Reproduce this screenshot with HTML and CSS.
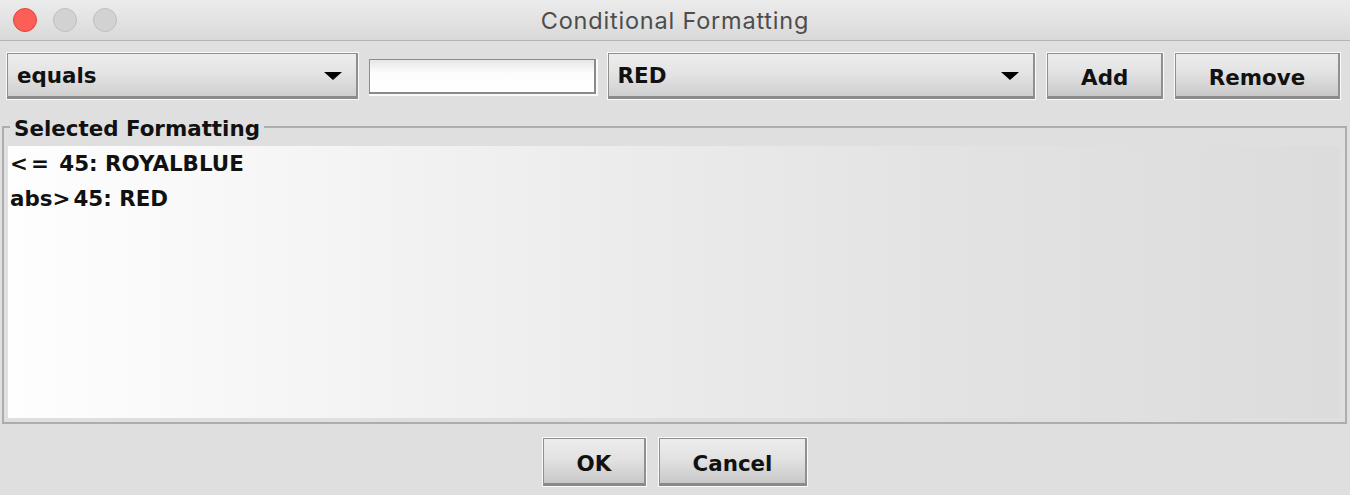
FILE: index.html
```html
<!DOCTYPE html>
<html lang="en">
<head>
  <meta charset="UTF-8">
  <title>Conditional Formatting</title>
  <link rel="stylesheet" href="styles.css">
</head>
<body>
  <div class="titlebar">
    <div class="lights">
      <span class="light close"></span>
      <span class="light"></span>
      <span class="light"></span>
    </div>
    <div class="title">Conditional Formatting</div>
  </div>

  <div class="toolbar">
    <div class="combo combo-op">
      <span>equals</span>
      <span class="arrow"></span>
    </div>
    <input type="text" class="field">
    <div class="combo combo-color">
      <span>RED</span>
      <span class="arrow"></span>
    </div>
    <button class="btn btn-add">Add</button>
    <button class="btn btn-remove">Remove</button>
  </div>

  <fieldset class="group">
    <legend>Selected Formatting</legend>
    <ul class="rules">
      <li><span class="op">&lt;=</span> 45: ROYALBLUE</li>
      <li>abs<span class="op">&gt;</span>45: RED</li>
    </ul>
  </fieldset>

  <div class="footer">
    <button class="btn btn-ok">OK</button>
    <button class="btn btn-cancel">Cancel</button>
  </div>
</body>
</html>
```

FILE: styles.css
```css
body {
  margin: 0;
  width: 1350px;
  height: 495px;
  overflow: hidden;
  background: #dfdfdf;
  font-family: "DejaVu Sans", "Liberation Sans", sans-serif;
  font-weight: bold;
  font-size: 21.4px;
  color: #111;
}

.titlebar {
  position: relative;
  height: 40px;
  background: linear-gradient(#ececec, #d9d9d9);
  border-bottom: 1px solid #b4b4b4;
  display: flex;
  align-items: center;
  justify-content: center;
}
.lights {
  position: absolute;
  left: 13px;
  top: 8px;
  display: flex;
  gap: 16px;
}
.light {
  width: 22px;
  height: 22px;
  border-radius: 50%;
  background: #d2d2d2;
  border: 1px solid #bfbfbf;
}
.light.close {
  background: #fd5f57;
  border-color: #e0443e;
}
.title {
  font-family: Inter, "Noto Sans", sans-serif;
  font-weight: normal;
  font-size: 23.5px;
  letter-spacing: 0.8px;
  color: #4d4d4d;
}

.toolbar {
  display: flex;
  align-items: center;
  gap: 12px;
  padding: 12px 10px 0 7px;
  height: 46px;
}

.combo {
  box-sizing: border-box;
  height: 46px;
  display: flex;
  align-items: center;
  justify-content: space-between;
  padding: 1px 14px 0 9px;
  border: 1px solid #8f8f8f;
  border-right-width: 2px;
  border-bottom: 3px solid #8a8a8a;
  box-shadow: 0 0 0 1px #fafafa;
  background: linear-gradient(#ededed, #e4e4e4 45%, #cfcfcf);
}
.combo-op {
  width: 351px;
}
.combo-color {
  width: 428px;
}
.arrow {
  width: 0;
  height: 0;
  border-left: 9px solid transparent;
  border-right: 9px solid transparent;
  border-top: 8px solid #000;
}

.field {
  box-sizing: border-box;
  width: 227px;
  height: 35px;
  border: 1px solid #8c8c8c;
  border-right: 2px solid #8a8a8a;
  border-bottom: 2px solid #8a8a8a;
  box-shadow: 1px 1px 0 1px #fafafa;
  background: linear-gradient(#e6e6e6, #fdfdfd 40%, #fff);
  margin-left: -1px;
}

.btn {
  box-sizing: border-box;
  height: 46px;
  font-family: "DejaVu Sans", "Liberation Sans", sans-serif;
  font-weight: bold;
  font-size: 21.4px;
  color: #111;
  border: 1px solid #8f8f8f;
  border-right-width: 2px;
  border-bottom: 3px solid #8a8a8a;
  box-shadow: 0 0 0 1px #fafafa;
  background: linear-gradient(#ececec, #e2e2e2 45%, #c8c8c8);
  padding: 5px 0 0;
}
.btn-add {
  width: 116px;
}
.btn-remove {
  width: 165px;
}

.group {
  margin: 14px 3px 0 2px;
  padding: 5px 5px 4px 4px;
  border: 2px solid #adadad;
}
.group legend {
  margin-left: 2px;
  padding: 4px 4px 0;
  line-height: 24px;
}

.rules {
  list-style: none;
  margin: 0;
  padding: 0 2px;
  height: 272px;
  box-sizing: border-box;
  background: linear-gradient(to right, #fefefe, #f0f0f0 35%, #e3e3e3 70%, #dcdcdc);
}
.rules li {
  line-height: 35px;
}
.rules .op {
  letter-spacing: 3px;
}

.footer {
  display: flex;
  justify-content: center;
  gap: 13px;
  margin-top: 14px;
}
.btn-ok {
  width: 103px;
  height: 48px;
}
.btn-cancel {
  width: 148px;
  height: 48px;
}
```
